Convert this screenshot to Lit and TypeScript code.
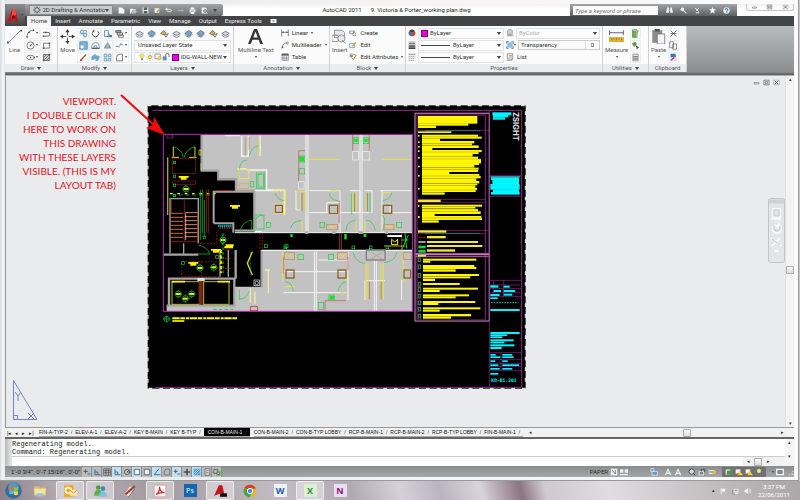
import { LitElement, html, svg, css, SVGTemplateResult, TemplateResult } from "lit";
import { customElement, property } from "lit/decorators.js";
import { classMap } from "lit/directives/class-map.js";

/* ---------- icons, each on a 12 x 12 grid ---------- */

const K = "#555";
const B = "#3f83b5";
const ln = (d: string, c = K, w = 1) => svg`<path d=${d} fill="none" stroke=${c} stroke-width=${w} />`;
const fl = (d: string, c = K) => svg`<path d=${d} fill=${c} />`;

const icons: Record<string, SVGTemplateResult> = {
  line: svg`${ln("M1.500 10.500L10.500 1.500", K, 0.5)}${fl("M0 10h1.500v1.500H0zM10.500 .5H12V2h-1.500z", K)}`,
  arc: svg`${ln("M1.500 10.500C2 4 5 2 10 1.500")}${fl("M.5 9.500h2v2h-2zM9 .5h2v2H9zM3 3.500h2v2H3z", K)}`,
  polyline: svg`${ln("M1 4.500h7a2.500 2.500 0 0 1 0 5H2", K, 1.200)}${fl("M1 8.500h2v2H1zM4 3.500h2v2H4z")}`,
  circle: svg`<circle cx="6" cy="6" r="4.800" fill="none" stroke="#555" />${ln("M6 6L9 3")}${fl("M5 5h2v2H5z")}`,
  rect: svg`${ln("M2 3h8v6.500H2z")}${fl("M1 8.500h2v2H1zM9 2h2v2H9z")}`,
  ellipse: svg`<ellipse cx="6" cy="6" rx="5" ry="3" fill="none" stroke="#555" />${fl("M5 5h2v2H5zM10 5h2v2h-2z")}`,
  hatch: svg`${fl("M2 2h8v8H2z", "#ccc")}${ln("M2 2h8v8H2zM2 6l4-4M2 10l8-8M6 10l4-4")}${fl("M1 9h2v2H1zM9 1h2v2H9z")}`,
  move: svg`${ln("M6 2v8M2 6h8", K, 0.8)}${fl("M6 0l1.600 2.500H4.400zM6 12l1.600-2.500H4.400zM0 6l2.500-1.600v3.200zM12 6L9.500 4.400v3.200z", "#333")}${fl("M5 5h2v2H5z", "#fff")}`,
  copy: svg`<circle cx="4" cy="4" r="2.500" fill="#cde" stroke=${B} /><circle cx="8" cy="8" r="2.500" fill="#cde" stroke=${B} />${ln("M7 2h3v3", K, 0.8)}`,
  rotate: svg`${ln("M3 3a4.300 4.300 0 1 0 6 0", K, 1.300)}${fl("M4.500 .5v4L1.500 3z")}`,
  stretch: svg`${ln("M2 2h5v8H2z", B)}${ln("M7 5l3 5H5", K)}${fl("M9 8h3v3H9z", B)}`,
  scale: svg`${fl("M1 1h10v10H1z", "#7fb2d8")}${fl("M2 6h4v4H2z", "#fff")}${ln("M1 1h10v10H1z", B)}`,
  mirror: svg`${fl("M5 2v8H1zM7 2v8h4z", "#6d8ea8")}${ln("M6 1v10", K, 0.6)}`,
  offset: svg`${ln("M1 10V7a5 5 0 0 1 10 0v3zM4 9.500V8a2 2 0 0 1 4 0v1.500z", B)}${fl("M1 9h10v1.500H1z", K)}`,
  brush: svg`${ln("M3 9l6.500-7", "#8a5a2a", 1.600)}${fl("M1 11l1-3.500L5 10z", "#d33")}`,
  group: svg`${fl("M1 5l4-3 3 2-3 4-4 1zM6 6l3-3 3 2-2 5-4 1z", "#74aad2")}${ln("M1 5l4-3 3 2-3 4-4 1z", B, 0.6)}`,
  array: svg`${ln("M1.500 1.500h3.500v3.500h-3.500zM7 1.500h3.500v3.500H7zM1.500 7h3.500v3.500h-3.500zM7 7h3.500v3.500H7z", B)}`,
  fillet: svg`${ln("M2 10.500V6a4.500 4.500 0 0 1 4.500-4.500H10V10.500z")}`,
  trim: svg`${ln("M1 7h4M7 5h4", K)}${ln("M5 9l3-7", B, 0.7)}`,
  stack: svg`${fl("M1 2h7v3H1z", "#999")}${ln("M1 2h7v3H1zM3 5h7v3H3zM5 8h6v3H5z")}`,
  layers: svg`${fl("M1 6l5-3 5 3-5 3z", "#cfd8df")}${ln("M1 6l5-3 5 3-5 3zM1 8.500l5 3 5-3", "#667")}`,
  layersBlue: svg`${fl("M1 6l5-4 5 3-4 5z", "#73a6cc")}${ln("M1 6l5-4 5 3-4 5zM2 9l5 2 4-4", "#567")}`,
  layersGold: svg`${fl("M1 6l4-4 3 3-3 3z", "#d9b24c")}${ln("M1 6l4-4 3 3-3 3zM6 8l5-2-3 5z")}`,
  bulb: svg`<circle cx="6" cy="4.500" r="3.200" fill="#f4ee62" stroke="#998" stroke-width=".7" />${fl("M4.800 8h2.400v3H4.800z", "#777")}`,
  sun: svg`<circle cx="6" cy="6" r="2.500" fill="#ffe36b" stroke="#a83" stroke-width=".8" />${ln("M6 .5v2M6 9.500v2M.5 6h2M9.500 6h2M2 2l1.500 1.500M10 2L8.500 3.500M2 10l1.500-1.500M10 10L8.500 8.500", "#a83", 0.8)}`,
  freeze: svg`${ln("M1.500 1.500h8v7h-8z", "#666")}<circle cx="8" cy="8" r="2.600" fill="#ffdc59" stroke="#b83" stroke-width=".7" />`,
  lock: svg`${fl("M1 5h6v6H1z", "#5a8fbb")}${ln("M5.500 5V3a2 2 0 0 1 5 0v3", K, 1.200)}`,
  letterA: svg`${fl("M0 12L4.800 0h2.400L12 12H9.800L8.500 8.600h-5L2.200 12zM4.200 6.800h3.600L6 2z", "#333")}`,
  linear: svg`${ln("M1 1v10M11 1v10M1 5h10", K, 1)}${fl("M1 5l3-1.500v3zM11 5L8 3.500v3z")}`,
  leader: svg`${ln("M2 10C3 3 6 3 8 3", K)}${fl("M.5 11.500l1-4 2.500 2z")}<circle cx="9.500" cy="3" r="1.500" fill="none" stroke="#555" />`,
  table: svg`${fl("M1 1h10v3H1z", "#667")}${ln("M1.500 1.500h9.500v9.500h-9.500zM1 7.500h10M4.500 4v7M8 4v7", K, 0.8)}`,
  insert: svg`${fl("M2 1h7v5H2z", "#e4e6e8")}${ln("M2 1h6l2 2v4H2zM0 5h5v5H0z", "#888", 0.7)}<circle cx="7.500" cy="7.500" r="2.800" fill="#e8eaec" stroke="#888" stroke-width=".7" />${ln("M8 9l3 2.500", "#888", 0.7)}`,
  create: svg`${ln("M1 3h6v4H1zM8 2v5", "#777")}<circle cx="8" cy="8" r="2.500" fill="#eee" stroke="#777" />`,
  edit: svg`${ln("M1 4h7v6H1z", B)}${ln("M5 8l5-6", "#c9a227", 1.800)}`,
  attr: svg`${fl("M1 3h5v3H1z", "#999")}${ln("M2 1l8 2-3 7-4-4z", "#777")}${ln("M7 9l4-6", "#c9a227", 1.500)}`,
  wheel: svg`<circle cx="6" cy="6" r="5" fill="#e8c73c" />${fl("M6 6L1.500 3.500A5 5 0 0 1 10.500 3.500z", "#444")}${fl("M6 6l4.500-2.500A5 5 0 0 1 6 11z", "#d43d3d")}${fl("M6 6v5A5 5 0 0 1 1.500 3.500z", "#3f6fc4")}`,
  plotStyle: svg`<circle cx="6" cy="4.500" r="4" fill="#ccc" stroke="#999" />${fl("M1 7h10v4H1z", "#bbb")}${ln("M3 9h6", "#888")}`,
  weight: svg`${fl("M1 1h10v1H1zM1 3.500h10v1.500H1zM1 6.500h10v2H1zM1 9.500h10v2.500H1z", "#444")}`,
  types: svg`${ln("M1 2h10", K)}<path d="M1 5h10M1 8h10M1 11h10" stroke="#666" stroke-dasharray="2 1" />`,
  list: svg`${ln("M2 1h8v8H2zM4 3.500h5M4 6h5M1 11h8V9", "#666", 0.9)}`,
  bluebox: svg`${fl("M2 2h8v8H2z", "#8cc3e6")}${ln("M1 4V1h3M8 1h3v3M11 8v3H8M4 11H1V8", "#357")}`,
  measure: svg`${ln("M.5 1v4M11.500 1v4M.5 3h11", "#556", 0.7)}${fl("M0 6.500h12v4H0z", "#d9b13e")}${ln("M2 7v2M4 7v1.500M6 7v2M8 7v1.500M10 7v2", "#8a6a10", 0.5)}`,
  quick: svg`${fl("M2 2h5v9H2z", "#6cae4c")}${ln("M2 1h6v10H2z", "#486")}${ln("M5 8l5-6", "#b93", 1.500)}`,
  select: svg`${fl("M1 3l5-2 2 3-4 4z", "#5a9e52")}${fl("M6 5l5 4-2 .5-1 2z", "#456")}`,
  calc: svg`${fl("M2 1h8v10H2z", "#888")}${fl("M3 2h6v2H3z", "#dfe7ea")}${ln("M3 6h6M3 8h6M3 10h6", "#ddd", 0.8)}`,
  paste: svg`${fl("M1 1h8v10H1z", "#8d8d8a")}${fl("M3 0h4v2H3z", "#555")}${fl("M5 4h6v8H5z", "#f2f4f6")}${ln("M5 4h6v8H5z", "#667", 0.6)}`,
  cut: svg`${ln("M2 2l8 8M10 2l-8 8M2 6h8", "#555", 1)}`,
  copyDoc: svg`${fl("M1 1h5v8H1zM5 4h6v7H5z", "#fff")}${ln("M1 1h5v8H1zM5 4h5v7H5z", "#666")}`,
  matchProp: svg`${fl("M2 1h7v5H2z", "#3e78b3")}${fl("M4 6h7v5H4z", "#dde")}${ln("M2 10l5-4", "#c33", 1.500)}`,
  gear: svg`<circle cx="6" cy="6" r="3.500" fill="none" stroke="#555" stroke-width="1.500" />${ln("M6 0v2M6 10v2M0 6h2M10 6h2M2 2l1 1M10 2L9 3M2 10l1-1M10 10L9 9")}`,
  newDoc: svg`${fl("M1 1h6l4 4v6H1z", "#fafafa")}`,
  open: svg`${fl("M0 3h5l1 1h4v2H4l-2 5H0z", "#eee")}${fl("M4 7h8l-2 4H3z", "#bbb")}`,
  save: svg`${fl("M1 1h10v10H1z", "#e5e8ea")}${fl("M3 1h6v4H3zM3 7h6v4H3z", "#566")}`,
  saveAs: svg`${fl("M1 2h8v8H1z", "#e5e8ea")}${ln("M5 9l6-6", "#c8a040", 2)}`,
  undo: svg`${ln("M4 8h5a2 2 0 0 0 0-4H3", "#eee", 1.500)}${fl("M0 4l4-3v6z", "#eee")}`,
  redo: svg`${ln("M1 6h8", "#aaa", 1.500)}${fl("M12 6L8 3v6z", "#aaa")}`,
  print: svg`${fl("M1 4h10v5H1z", "#eee")}${fl("M3 1h6v3H3zM3 8h6v4H3z", "#fff")}${ln("M3 7h6", "#444")}`,
  preview: svg`${fl("M1 1h7l2 2v8H1z", "#eee")}<circle cx="7" cy="7" r="2.500" fill="#bcd" stroke="#444" />${ln("M9 9l2 2", "#eee", 1.500)}`,
  binoc: svg`${fl("M2 1h3v5h2V1h3l2 9H7V7H5v3H0z", "#eee")}`,
  key: svg`<circle cx="4" cy="4" r="3" fill="#eee" />${ln("M5 5l6 6", "#eee", 2)}`,
  sat: svg`${ln("M2 2l6 6M8 2L4 7M3 10h6", "#eee", 1.700)}`,
  star: svg`${fl("M6 0l1.800 4H12L8.700 6.800 10 11.500 6 8.800 2 11.500l1.300-4.700L0 4h4.200z", "#f4f4f4")}`,
  help: svg`<circle cx="6" cy="6" r="5.500" fill="#dfe6f2" />${ln("M4 4.500a2 2 0 1 1 2.500 2V8M6.500 9v1.200", "#246", 1.300)}`,
  winMin: svg`${ln("M2 6h8v2.500H2z", "#666")}`,
  winMax: svg`${ln("M1.500 2h9v8h-9zM4 4.500h4v3H4z", "#666", 1.200)}`,
  winClose: svg`${ln("M1 2h10v8H1z", "#999", 0.8)}${ln("M3 3l6 6M9 3L3 9", "#555", 1.600)}`,
  logo: svg`${fl("M0 12L5 0h3l2 12H7.500L7 9 3 12z", "#c5141a")}${fl("M5 0h3l.5 5L4 9z", "#ef4a47")}${fl("M5 6h2v2.500H4.500z", "#5d0508")}`,
  snap: svg`${ln("M1 5h6M4 2v6M7 9h4", "#444", 1.200)}`,
  ortho: svg`${ln("M3 2v8h8M3 6h4v4", "#36698e", 1.300)}`,
  grid: svg`${ln("M1 1h10v10H1zM1 4h10M1 7h10M4.500 1v10M8 1v10", "#444", 0.9)}`,
  polar: svg`<circle cx="6" cy="6" r="4" fill="none" stroke="#444" />${ln("M6 6h6M6 6l4-4", "#444")}`,
  osnap: svg`${fl("M2 2h8v8H2z", "#eef5f8")}${ln("M2 2h8v8H2z", "#456", 1.200)}`,
  angle: svg`${ln("M9 1L2 10h9", "#36698e", 1.400)}`,
  plus: svg`${ln("M1 6h10M6 1v10", "#222", 1.600)}`,
  shade: svg`${fl("M1 1h10v10H1z", "#4f9bd0")}${ln("M1 4l3-3M1 8l7-7M1 11L11 1M5 11l6-6", "#bfe0f2")}`,
  sheetOff: svg`${fl("M3 1h7v10H3z", "#d5d6d7")}${ln("M3 1h7v10H3zM5 4h3M5 7h3", "#555")}`,
  cycle: svg`${ln("M1 2h6v6H1z", "#444")}${fl("M5 5h6v6H5z", "#4e9c44")}${fl("M7 7h2v2H7z", "#fff")}`,
  modelTab: svg`${fl("M1 1h10v10H1z", "#eee")}${ln("M3 3l5 6V3", "#555")}`,
  quickview: svg`${fl("M0 2h5v5H0zM7 2h5v5H7zM0 9h12v2H0z", "#eee")}`,
  world: svg`${fl("M2 3h9v7H2z", "#5fa0cc")}${ln("M1 1h5v4H1zM3 5h8v6H3z", "#e8f0f4")}`,
  person: svg`${ln("M2 11L6 2l4 9M4 8h6", "#e7f1f5", 1.700)}`,
  lens: svg`<circle cx="5.500" cy="5.500" r="4" fill="#ddd" stroke="#333" stroke-width="1.200" />${ln("M8.500 8.500L11 11", "#333", 1.500)}`,
  padlock: svg`${fl("M1 5h8v6H1z", "#e6e6e6")}${ln("M5 5V2h5v4M3 7h4v2H3z", "#333")}`,
  barYellow: svg`${fl("M1 3h9v2H1zM1 7h9v2H1z", "#eee")}${fl("M7 4h5v5H7z", "#e0ba37")}`,
  tgreen: svg`${fl("M1 2h7v8H1z", "#d7e4ee")}${fl("M3 4h8v6H3z", "#4b9a3c")}`,
  tyellow: svg`${fl("M1 2h7v7H1z", "#f4f4e8")}${fl("M7 4l5 7H3z", "#f0cd31")}${fl("M2 8h3v2H2z", "#c43")}`,
  screen: svg`${fl("M0 2h12v8H0z", "#f8f8f8")}${fl("M4 5h4v2H4z", "#555")}`,
  clean: svg`${fl("M1 2h10v8H1z", "#8a8c8d")}${ln("M1 2h10v8H1z", "#f8f8f8", 1.800)}`,
  flag: svg`${ln("M2 1v10", "#f4f4f4", 1.500)}${fl("M3 2h6v5H3z", "#f4f4f4")}`,
  net: svg`${fl("M3 2h8v6H3zM5 9h5v2H5z", "#f4f4f4")}${ln("M1 4v7h4M5 4h4v2H5z", "#777")}`,
  sound: svg`${fl("M1 4h2l4-3v10L3 8H1z", "#f4f4f4")}${ln("M8.500 3.500q2 2.500 0 5M10.500 2q3 4 0 8", "#f4f4f4")}`,
  start: svg`<circle cx="6" cy="6" r="5.800" fill="#2f6e9f" /><circle cx="6" cy="4" r="3.800" fill="#6fb0d2" opacity=".6" />${fl("M3 3.500q1.500-1 2.700-.3v2.500Q4.500 5 3 5.800z", "#ef6a35")}${fl("M6.200 3.400q1.500.8 3 .1v2.400q-1.500.8-3 0z", "#8cc63f")}${fl("M3 6.400q1.500-.9 2.700-.2v2.500Q4.500 8 3 8.900z", "#4db8ea")}${fl("M6.200 6.400q1.500.8 3 .1v2.400q-1.500.8-3 0z", "#fcd53c")}`,
  folder: svg`${fl("M1 2h4l1 1h5v7H1z", "#d9bd63")}${fl("M1 4h10l-.5 5h-9z", "#f4e4a0")}${fl("M3 8h6v3H3z", "#8fc2de")}`,
  outlook: svg`${fl("M1 1h8v10H1z", "#f0a91e")}<circle cx="4.500" cy="5.500" r="2.400" fill="none" stroke="#fff" stroke-width="1.400" />${fl("M6 5h6v5H6z", "#fbe7a9")}${ln("M6 5l3 3 3-3", "#c98512", 0.7)}`,
  people: svg`<circle cx="4.500" cy="3" r="2" fill="#4c9e3c" /><circle cx="8.500" cy="4" r="2" fill="#4a86b8" />${fl("M1 10q0-5 3.500-5T8 10z", "#5cb048")}${fl("M5 11q0-4.500 3.500-4.500T12 11z", "#79bfe0")}`,
  paint: svg`${fl("M1 9l5-7 4 2-4 7z", "#e8e2dc")}${ln("M2 9L10 2", "#a33b22", 1.800)}${ln("M5 11l5-7", "#554", 0.8)}`,
  pdf: svg`${fl("M1 1h10v10H1z", "#fbf6f5")}${ln("M1 1h10v10H1z", "#c99", 0.6)}${ln("M2.500 9C5 8 6 4 5.500 2.500 6 6 8 7.500 10 7.500 7 7 4 8 2.500 9z", "#d42a22", 1)}`,
  cad: svg`${fl("M1 10L5 1h3l2 9-3-2z", "#c3161c")}${fl("M6 8h6v3H6z", "#111")}`,
  chrome: svg`<circle cx="6" cy="6" r="5.500" fill="#e2b92d" />${fl("M6 6L1.200 3.200A5.500 5.500 0 0 1 11 4H6z", "#d9402f")}${fl("M6 6L1.200 3.200A5.500 5.500 0 0 0 5.500 11.500L8 7z", "#4aa350")}<circle cx="6" cy="6" r="2.300" fill="#4d8fd6" stroke="#fff" stroke-width=".8" />`,
  corner: svg`${fl("M8 8h3v3H8zM4 9h2v2H4zM9 4h2v2H9z", "#ccc")}`,
};

@customElement("ui-icon")
export class UiIcon extends LitElement {
  @property() name = "";
  static styles = css`
    :host { display: inline-flex; flex: none; width: 8px; height: 8px; }
    svg { width: 100%; height: 100%; display: block; }
  `;
  render() {
    return html`<svg viewBox="0 0 12 12" aria-hidden="true">${icons[this.name]}</svg>`;
  }
}

/* ---------- the drawing sheet, in thirds of a pixel ---------- */

type Box = [number, number, number, number];
const boxes = (list: Box[], c: string) =>
  list.map(([x, y, w, h]) => svg`<rect x=${x} y=${y} width=${w} height=${h} fill=${c} />`);
const frames = (list: Box[], c: string, w = 2) =>
  list.map(([x, y, bw, h]) => svg`<rect x=${x} y=${y} width=${bw} height=${h} fill="none" stroke=${c} stroke-width=${w} />`);
const path = (d: string, c: string, w = 2, dash = "none") =>
  svg`<path d=${d} fill="none" stroke=${c} stroke-width=${w} stroke-dasharray=${dash} />`;
const tag = (x: number, y: number) => svg`
  <circle cx=${x} cy=${y} r="9" fill="none" stroke="#1fd03a" stroke-width="2" />
  <path d="M${x - 13} ${y}h26M${x} ${y - 13}v26" stroke="#1fd03a" stroke-width="1.500" />
  <rect x=${x - 7} y=${y - 3} width="14" height="6" fill="#e6ea10" />`;
const plate = (x: number, y: number) =>
  svg`<path d="M${x} ${y}h30v5h-6v6h-18v-6h-6z" fill="#fff200" />`;

const Y = "#fff600";
const C = "#00f4ff";
const M = "#a32aa0";
const G = "#19d23c";
const R = "#c42020";
const W = "#f4f4f4";
const WALL = "#a5a5a5";

const noteBars: Box[] = [
  [39, 48, 178, 23], [39, 70, 151, 7], [39, 77, 54, 7],
  [51, 104, 168, 7], [51, 110, 179, 6], [51, 116, 54, 8], [51, 123, 157, 7], [51, 130, 150, 6],
  [51, 136, 170, 8], [51, 142, 31, 9], [51, 150, 179, 6], [51, 156, 170, 6], [51, 162, 152, 8], [51, 170, 168, 7],
  [51, 177, 177, 13], [51, 189, 171, 6], [51, 195, 157, 8], [51, 203, 170, 6], [51, 209, 168, 7], [51, 216, 82, 7],
  [51, 222, 172, 6], [51, 228, 176, 7], [51, 235, 163, 8], [51, 243, 172, 7], [51, 250, 166, 6], [51, 256, 160, 8],
  [51, 264, 165, 6], [51, 270, 161, 6], [51, 277, 68, 7],
  [51, 314, 180, 6], [51, 320, 160, 6], [51, 327, 168, 7], [51, 334, 176, 8], [51, 341, 38, 7],
  [51, 348, 178, 6], [51, 354, 180, 6], [51, 361, 50, 7],
  [54, 476, 160, 6], [54, 482, 22, 6], [54, 495, 154, 6], [54, 501, 160, 6], [54, 508, 98, 7],
  [54, 522, 168, 6], [54, 529, 142, 6], [54, 536, 36, 7], [54, 549, 110, 6],
  [54, 563, 165, 6], [54, 570, 50, 6], [54, 583, 138, 6], [54, 589, 98, 6],
  [54, 603, 157, 6], [54, 609, 46, 6], [54, 622, 172, 6], [54, 629, 50, 6],
  [54, 642, 144, 7], [54, 649, 84, 7],
];
const paleBars: Box[] = [
  [39, 94, 100, 5], [39, 299, 68, 7], [39, 391, 85, 7], [66, 408, 56, 7], [66, 423, 153, 6],
  [66, 435, 166, 6], [66, 448, 84, 7], [39, 465, 24, 5],
  [39, 105, 5, 5], [39, 124, 5, 5], [39, 138, 5, 5], [39, 151, 5, 5], [39, 171, 5, 5], [39, 197, 5, 5],
  [39, 225, 5, 5], [39, 264, 5, 5], [39, 315, 4, 6], [39, 348, 5, 6],
];
const cyanBars: Box[] = [
  [262, 37, 57, 9], [264, 45, 46, 7], [264, 52, 36, 7],
  [258, 232, 84, 8], [262, 240, 80, 12], [256, 252, 88, 17], [264, 268, 78, 9], [258, 276, 86, 8],
  [256, 556, 24, 7], [296, 557, 18, 6], [266, 570, 22, 6], [296, 570, 34, 6], [256, 582, 28, 6], [296, 581, 26, 6],
  [256, 592, 22, 5], [256, 627, 88, 6],
  [256, 696, 88, 6], [256, 703, 50, 5], [256, 709, 36, 5], [256, 718, 70, 6], [256, 725, 42, 5], [256, 733, 72, 6], [256, 741, 34, 6],
  [256, 762, 16, 5], [292, 762, 30, 5], [256, 769, 30, 5], [292, 769, 34, 5], [256, 781, 14, 5], [292, 781, 16, 5],
  [256, 793, 24, 5], [292, 793, 50, 5], [256, 804, 28, 5], [292, 804, 30, 5], [256, 819, 24, 5],
];

@customElement("sheet-drawing")
export class SheetDrawing extends LitElement {
  static styles = css`
    :host { display: block; }
    svg { display: block; width: 100%; }
    .brand { font: 700 23px Inter, sans-serif; fill: #e8e8e8; }
    .number { font: 700 14px "DejaVu Sans Mono", monospace; fill: #00f4ff; }
  `;

  private suite() {
    return svg`
      <path d="M170 105H802V398H328V272H275V236H220V212H170z" fill="#c2c2c2" />
      <path d="M350 450H802V634H65V617H270V560H350z" fill="#c2c2c2" />
      ${path("M170 105V212H220V238H273V272H328V392H270", WALL, 7)}
      ${path("M206 370V275H330M206 370H265V398", WALL, 6)}
      ${path("M350 562V450M65 617H268V536H72V617M272 450V536M55 464H160", WALL, 7)}
      ${path("M75 460V296H160V430M116 430V464M225 450V530M250 450V530", WALL, 4)}
      ${path("M270 398H802", W, 3)}${path("M350 451H802", W, 4)}`;
  }

  private core() {
    return svg`
      ${path("M85 170V140M150 170V140M80 172H102M132 172H155", "#cbd83a", 3)}
      ${path("M85 140Q112 150 115 172M150 140Q120 150 118 172", G)}
      ${frames([[83, 176, 68, 45], [83, 243, 68, 10]], "#8e1c1c")}
      ${path("M68 172V345", "#a8ac28", 4)}${path("M162 150h6v15h-6zM168 190V210", Y)}
      ${frames([[85, 184, 7, 7], [85, 225, 7, 7], [85, 252, 7, 7], [85, 283, 7, 7]], G)}
      ${plate(101, 228)}${tag(123, 267)}
      ${path("M75 281H212", Y, 4, "8 14")}${path("M82 285H206", G, 2, "12 8")}
      ${path("M172 268V400M178 300V410M166 270V420", G, 2)}
      ${path("M184 268V400M190 268V400M215 272H265", R)}
      ${path("M75 340h40M75 352h40M75 364h40M75 376h40M75 388h40M75 400h40M75 412h40", "#c86a38", 3)}
      ${path("M120 338h38M120 350h38M120 362h38M120 374h38M120 386h38M120 398h38M120 410h38", "#d88b5a", 3)}
      ${path("M118 300V425M158 335V425M75 425H158M80 300V340", R)}
      ${path("M122 340V420", W)}
      ${plate(255, 315)}
      ${path("M160 435Q185 440 195 462H160M285 395Q290 365 320 360V395", G)}
      ${path("M220 378H262", C, 8, "3 3")}${path("M224 384H262", R, 6, "3 4")}
      ${tag(234, 420)}${plate(198, 447)}${plate(130, 486)}
      ${path("M242 436h24M238 442h26", Y, 6)}
      ${path("M165 430H215V395M110 485H225V530H110zM170 485V530M345 400V450M353 400V450M240 450h22M240 475h22M240 505h22", R, 2, "6 4")}
      ${path("M228 450V520", Y, 5, "10 6")}${path("M234 400V525", G, 3, "8 6")}
      ${frames([[110, 485, 8, 8], [212, 467, 8, 8], [174, 408, 7, 7], [358, 434, 9, 9], [420, 434, 9, 9]], G)}
      ${tag(165, 504)}${tag(206, 502)}
      ${path("M322 455L307 490L322 525", "#d5d940", 4)}${path("M303 483l14 9M317 455V525", G, 1)}
      ${frames([[81, 545, 82, 68], [176, 545, 76, 68]], "#b9b92c", 3)}
      ${path("M80 545H120M218 545H255", Y, 5)}${boxes([[162, 537, 11, 76]], "#7e2420")}
      ${boxes([[157, 534, 22, 9]], "#ddd")}
      ${tag(100, 582)}${tag(140, 582)}${tag(121, 596)}
      ${frames([[327, 540, 16, 17]], W)}<circle cx="335" cy="549" r="5" fill="none" stroke=${W} stroke-width="2" />
      ${path("M283 596Q300 602 315 570M283 570V600", G)}
      ${path("M330 575V612M316 565V608M370 510V580M360 510H375", "#efe9a0", 4)}
      ${frames([[316, 620, 22, 12]], R)}${path("M205 628h60", G, 3, "10 7")}`;
  }

  private units() {
    return svg`
      ${path("M290 107V168H310V107M240 107H285M345 107V168M278 207H305M305 210H365V270H420M330 272H400M330 395H350M418 270V345", W, 4)}
      ${path("M302 110V168M312 110V150", "#b08e5a", 2)}
      ${path("M313 168Q318 140 342 137M283 232V207Q285 182 306 180M330 360Q345 340 355 348M390 280Q400 302 418 302", G)}
      ${path("M343 115V170M282 208H312V236H283zM385 270H420V300", "#eee84a", 3)}
      ${frames([[335, 219, 24, 46], [339, 223, 16, 38], [316, 245, 10, 16], [333, 345, 24, 42], [364, 368, 12, 14]], G)}
      ${frames([[282, 250, 28, 16]], "#e6a93a")}
      ${frames([[388, 312, 28, 28]], "#eee84a")}${frames([[391, 316, 21, 21]], "#8d3a2c", 3)}
      <g transform="translate(405 0)">
        ${path("M78 105V398M84 105V398M240 105V398M246 105V398M0 272H16M88 272H180V398M210 272H240V338H88M300 272H395M306 272V398M330 310V338H395M254 272H276V338H246M140 338V308H178M103 455V634M109 455V634M10 515H200M10 578H200M115 480H205M204 455V600M283 482V634M289 482V634M258 542H315M365 540V600M396 510H375M255 542V600M48 272V330H60", W, 3)}
        ${path("M88 178H178M306 178H395M50 275H76V334M60 275V334M218 278V334M228 278V334M258 278V334M8 272H16V345M15 560H45M8 455V545M258 490V598M264 490V598M302 490V598M310 490V598M148 272H178M305 278H332M66 362V395M228 362V395M255 362V395M200 520V545M180 578H200M370 455V545", "#e9e34c", 3)}
        ${path("M66 278V334M224 278V334M262 278V334M268 545V598M303 545V598", "#8a6048", 2)}
        ${path("M215 278V345M270 278V340M148 280Q150 300 175 302M335 278Q330 300 308 302M32 385Q38 362 64 362M198 392Q200 362 226 362M258 360Q280 362 286 392M308 345Q320 360 308 392M16 545Q38 548 40 574M175 574Q178 548 200 545M220 460Q228 488 254 490M312 488Q345 485 350 458", G)}
        ${path("M75 152H56V245M218 105V152M268 105V152M135 602H198M135 602V632M10 470V520M178 302V370M178 400V450M184 400V450M204 510V470M365 400V450", "#c5524b", 2)}
        ${frames([[58, 168, 16, 18], [58, 206, 16, 16], [220, 113, 16, 18], [250, 113, 16, 18], [120, 367, 14, 16], [350, 367, 14, 16], [54, 463, 16, 16], [145, 463, 16, 16], [147, 585, 16, 14], [115, 608, 16, 20]], G)}
        ${boxes([[60, 170, 12, 14], [223, 116, 10, 10], [253, 116, 10, 10], [149, 587, 13, 10], [31, 402, 7, 9], [193, 402, 7, 16], [251, 402, 8, 9]], "#1ee02c")}
        ${frames([[148, 316, 25, 24], [310, 316, 25, 24], [18, 510, 24, 24], [174, 510, 24, 24], [372, 510, 20, 24]], "#8a6420", 4)}
        ${frames([[140, 373, 32, 16], [312, 373, 30, 16], [14, 458, 30, 20], [172, 458, 30, 20], [370, 458, 26, 20]], "#d8823e", 2)}
        ${path("M150 378l8 6 8-8M320 378l8 6 8-8M20 462l8 8 8-8M180 462l8 8 8-8", Y)}
        ${frames([[218, 155, 18, 25], [248, 155, 20, 25], [56, 245, 16, 22]], W)}
        ${boxes([[75, 394, 10, 8], [157, 394, 10, 8], [236, 394, 14, 8], [316, 394, 8, 8]], "#aaa")}
        ${boxes([[259, 450, 56, 10]], "#a8c8c8")}${frames([[259, 450, 56, 30]], "#8a7c7c", 4)}
        ${path("M275 458l30 18M305 458l-30 18", "#d48a8a")}
        ${path("M322 408h44", W, 6)}${path("M335 418v16h18v-16l-9 8z", Y, 3)}${path("M312 438H375", Y, 2)}
        ${path("M375 400L380 445M365 420h20M385 405L365 450", G, 3)}
        ${frames([[12, 438, 8, 8], [216, 438, 8, 8], [268, 438, 8, 8], [318, 438, 8, 8]], G)}
      </g>`;
  }

  private notes() {
    return svg`<g transform="translate(780 0)">
      ${frames([[30, 40, 223, 623]], "#a76a9c", 4)}${frames([[36, 45, 205, 615]], "#7f2b7e", 3)}
      ${path("M36 91H253M36 298H241M36 307H241M36 391H253M36 401H241", "#93347f", 2)}
      ${path("M32 463H253", "#d56fc8", 6)}${path("M32 470H253", "#a76a9c", 3)}
      ${path("M60 92H225M60 400H225", "#3d8f7c", 2)}
      ${boxes(noteBars, Y)}${boxes(paleBars, "#f2e83a")}
      ${path("M51 110H230M51 136H221M51 156H230M51 177H228M51 203H221M51 228H223M51 250H223M51 270H216M51 327H219M51 354H229", "#8f6f2a", 1)}
      ${path("M40 412H62", R)}${boxes([[40, 423, 22, 6]], "#999")}
      ${boxes([[40, 437, 22, 8], [40, 450, 22, 8]], G)}
      ${frames([474, 495, 521, 547, 563, 583, 603, 622, 643].map((y): Box => [40, y, 7, 11]), "#4c8a4c", 3)}
      ${path("M253 31V863M253 226H350M253 289H350M253 541H350M253 555H345M253 566H350M253 578H345M253 590H350M265 541V590M295 541V590M253 758H350M253 778H350M253 790H350M253 800H350M253 812H350M288 758V812", "#8f2b8c", 2)}
      ${boxes([[256, 228, 90, 5]], "#3c8a8a")}
      ${boxes(cyanBars, C)}
      ${path("M258 608H340", "#2f9a94", 4, "5 3")}
      <text class="brand" transform="translate(325 36) rotate(90)">ZSIGHT</text>
      <text class="number" x="259" y="845">KD-B1.201</text>
    </g>`;
  }

  render() {
    return html`<svg viewBox="0 0 1155 870" role="img" aria-label="Floor plan layout sheet">
      <rect x="8" y="16" width="1134" height="850" fill="#000" />
      <rect x="8" y="16" width="1134" height="850" fill="none" stroke="#dfe3e6" stroke-width="5" stroke-dasharray="11 21" />
      ${path("M22 31H1130V862H30", "#8f2b8c", 3)}
      ${this.suite()}${this.core()}${this.units()}
      ${frames([[55, 103, 747, 531]], "#b030b0", 3)}${frames([[66, 104, 16, 10]], M)}
      <circle cx="65" cy="657" r="8" fill="none" stroke=${G} stroke-width="2" />
      ${path("M53 657h24M65 646v22", G)}
      ${path("M82 655H278", Y, 6, "22 2 14 3 9 2")}${path("M82 663H118", Y, 5)}
      ${this.notes()}
    </svg>`;
  }
}

/* ---------- application window ---------- */

const menu = ["Home", "Insert", "Annotate", "Parametric", "View", "Manage", "Output", "Express Tools"];
const sheets = ["FIN-A-TYP-2", "ELEV-A-1", "ELEV-A-2", "KEY B-MAIN", "KEY B-TYP", "CON-B-MAIN-1", "CON-B-MAIN-2",
  "CON-B-TYP LOBBY", "RCP-B-MAIN-1", "RCP-B-MAIN-2", "RCP-B-TYP LOBBY", "FIN-B-MAIN-1"];
const toggles: [string, boolean][] = [["snap", false], ["ortho", false], ["grid", false], ["ortho", true], ["polar", false],
  ["osnap", true], ["osnap", false], ["angle", true], ["fillet", false], ["snap", true], ["plus", false], ["shade", true], ["sheetOff", false], ["cycle", false]];
const taskbar: [string, string, boolean][] = [["folder", "Explorer", false], ["outlook", "Outlook", true], ["people", "Messenger", true],
  ["paint", "SketchUp", false], ["pdf", "Acrobat", true], ["ps", "Photoshop", false], ["cad", "AutoCAD", true], ["chrome", "Chrome", false],
  ["word", "Word", false], ["excel", "Excel", true], ["onenote", "OneNote", false]];
const letters: Record<string, string> = { ps: "Ps", word: "W", excel: "X", onenote: "N" };

@customElement("app-root")
export class AppRoot extends LitElement {
  static styles = css`
    :host { display: flex; flex-direction: column; height: 100vh; min-height: 400px; overflow: hidden;
      font: 6px/8px Roboto, "Open Sans", sans-serif; color: #333; background: #c9c6c8; }
    * { box-sizing: border-box; }
    button, select, input { font: inherit; color: inherit; margin: 0; padding: 0; border: 0; background: none; border-radius: 0; }
    button { display: inline-flex; align-items: center; justify-content: center; white-space: nowrap; }
    select { appearance: none; width: 100%; height: 100%; }
    .tri { flex: none; width: 0; height: 0; border: 2px solid transparent; border-top: 3px solid #444; border-bottom: 0; }
    .small { border-width: 1px; border-top-width: 2px; }

    .window { flex: 1; min-height: 0; display: flex; flex-direction: column; margin: 0 1px 0 0; padding: 4px 4px 3px 5px;
      background: linear-gradient(90deg, #d6d9db, #f7f7f8 3px, #e3e5e7 5px, #f4f4f5 50%, #fbfbfb);
      border: solid #999; border-width: 0 1px 1px 0; }
    .top { display: grid; grid-template: 12px 10px / 20px 1fr; flex: none; }
    .app { grid-row: 1 / 3; background: linear-gradient(#8b8d8f, #444); gap: 1px; }
    .app ui-icon { width: 13px; height: 17px; }
    .title { display: flex; align-items: center; background: linear-gradient(#f4f0f2, #fff 40%); }
    .quick { display: flex; align-items: center; height: 12px; width: 198px; background: linear-gradient(#a2a4a6, #6d6f71); border-radius: 0 2px 2px 0; padding: 1px 4px; }
    .combo { display: flex; align-items: center; position: relative; background: #fcfcfc; border: 1px solid #e0e2e4; height: 11px; padding: 0 3px; }
    .quick .combo { width: 84px; height: 10px; background: #c9cbcc; border-color: #888; }
    .quick .bar { flex: 1; display: flex; justify-content: space-around; align-items: center; padding-left: 3px; }
    .quick .bar ui-icon, .help ui-icon { width: 7px; height: 7px; }
    .caption { flex: 1; display: flex; justify-content: center; gap: 9px; white-space: nowrap; color: #222; }
    .help { display: flex; align-items: center; width: 167px; height: 12px; background: linear-gradient(#a2a4a6, #5d5f61); padding: 1px 3px; gap: 4px; }
    .help input { width: 85px; height: 9px; background: #fafafa; padding: 0 2px; font-style: italic; }
    .help .tools { flex: 1; display: flex; justify-content: space-around; }
    .winbtns { display: flex; align-self: flex-start; justify-content: space-around; width: 48px; height: 7px; margin: 0 0 0 9px; border: 1px solid #c5c7c9; border-top: 0; border-radius: 0 0 3px 3px; }
    .winbtns ui-icon { width: 7px; height: 6px; }
    .menu { display: flex; align-items: stretch; background: #434445; color: #eee; padding-left: 2px; }
    .menu button { padding: 0 4px; }
    .menu .on { background: linear-gradient(#e8e9ea, #f9f9f9); color: #444; padding: 0 4px; }
    .menu ui-icon { width: 7px; height: 6px; }

    .ribbon { display: flex; flex: none; height: 46px; background: linear-gradient(#b9bbbc, #8b8d8f); }
    .panel { display: flex; flex-direction: column; flex: none; background: #fbfbfb; border-right: 1px solid #cfd1d3; }
    .body { flex: 1; display: flex; align-items: center; gap: 2px; padding: 1px 2px; }
    .foot { display: flex; align-items: center; justify-content: center; gap: 3px; height: 8px; background: #ebecee; color: #555; }
    .big { flex-direction: column; gap: 2px; align-self: stretch; justify-content: flex-start; padding-top: 2px; color: #555; }
    .big ui-icon { width: 15px; height: 15px; }
    .draw { width: 53px; } .modify { width: 74px; } .layers { width: 102px; } .annotation { width: 96px; }
    .block { width: 76px; } .properties { width: 197px; } .utilities { width: 46px; } .clipboard { width: 38px; }
    .annotation .body { gap: 7px; padding-left: 4px; }
    .tools3 { display: grid; grid-auto-rows: 12px; grid-auto-flow: row; align-items: center; justify-content: start; }
    .tools3 button { height: 11px; border: 1px solid #eceef0; gap: 1px; }
    .tools3 ui-icon, .icons ui-icon { width: 9px; height: 9px; }
    .c1 { grid-template-columns: 11px; } .c2 { grid-template-columns: 16px 12px; } .c4 { grid-template-columns: 12px 12px 12px 16px; }
    .stack { display: grid; grid-auto-rows: 12px; align-items: center; flex: 1; min-width: 0; }
    .stack > button { justify-content: flex-start; gap: 3px; }
    .icons { display: flex; justify-content: space-between; padding: 0 1px; }
    .swatch { flex: none; width: 7px; height: 7px; background: #ee00e6; border: 1px solid #707; margin-right: 2px; }
    .rule { flex: none; width: 29px; height: 1px; background: #444; margin-right: 3px; }
    .prop { display: flex; align-items: center; gap: 2px; }
    .prop .combo { flex: 1; padding: 0 2px; }
    .col1 { flex: none; width: 96px; } .dim { color: #aaa; }
    .trans { display: flex; flex: 1; align-items: center; height: 10px; border: 1px solid #ccc; padding-left: 2px; justify-content: space-between; }
    .trans input { width: 14px; height: 8px; border-left: 1px solid #ddd; text-align: center; }
    .seam { flex: none; height: 4px; background: linear-gradient(#8f9192, #5a5b5c 60%, #d5d6d7); }

    .work { flex: 1; min-height: 0; display: flex; border-left: 1px solid #999; }
    .canvas { flex: 1; position: relative; overflow: hidden; background: #e9ebed; }
    .canvas sheet-drawing { position: absolute; left: 139px; top: 24px; width: 385px; }
    .remark { position: absolute; left: 0; top: 18px; width: 110px; margin: 0; text-align: right; color: #e0141e; font: 10px/14px Lato, sans-serif; }
    .arrow { position: absolute; left: 112px; top: 16px; width: 50px; height: 46px; }
    .ucs { position: absolute; left: 5px; bottom: 5px; width: 28px; height: 44px; }
    .mdi { position: absolute; right: 5px; top: 3px; display: flex; gap: 3px; }
    .mdi ui-icon { width: 7px; height: 7px; }
    .nav { position: absolute; right: 0; top: 122px; width: 17px; height: 65px; }
    .vscroll { flex: none; width: 9px; display: flex; flex-direction: column; align-items: center; background: #f3f3f4; border-left: 1px solid #e0e0e0; }
    .thumb { width: 8px; height: 8px; background: linear-gradient(#fafafa, #ddd); border: 1px solid #aaa; border-radius: 1px; }
    .arr { font-size: 5px; line-height: 7px; color: #333; }
    .before { flex: 5; } .after { flex: 4; }

    .tabs { flex: none; display: flex; align-items: stretch; height: 10px; background: #f1f1f2; border-top: 1px solid #999; font: 5px/8px "Liberation Sans", sans-serif; color: #111; }
    .steps { display: flex; gap: 4px; padding: 0 3px 0 2px; width: 34px; }
    .tabs .sheet { border-bottom: 1px solid #aaa; }
    .tabs .sheet::after { content: "/"; padding: 0 3px; color: #333; }
    .tabs .on { background: #000; color: #eee; margin-right: 4px; padding-left: 4px; }
    .hscroll { flex: 1; display: flex; align-items: center; padding: 0 10px 0 6px; }
    .hscroll .before { flex: 5; } .hscroll .after { flex: 3; }
    .command { flex: none; display: grid; grid-template-columns: 7px 1fr 9px; height: 29px; border-top: 2px solid #666; background: #fff; }
    .grip { background: linear-gradient(90deg, #bbb, #e8e8e8); }
    .log { margin: 0; font: 7px/8px "Liberation Mono", monospace; color: #222; border-bottom: 1px solid #ccc; height: 18px; padding-top: 1px; }
    .prompt { display: flex; height: 9px; }
    .prompt input { flex: 1; }
    .hs { display: flex; align-items: center; gap: 4px; width: 42px; background: #f1f1f2; padding-left: 4px; }
    .vs { display: flex; flex-direction: column; justify-content: space-between; background: #f4f4f5; align-items: center; }
    .status { flex: none; display: flex; align-items: center; height: 11px; background: linear-gradient(#8a8c8d, #a5a7a8); padding-left: 6px; }
    .coords { width: 71px; color: #222; white-space: nowrap; font-family: "Liberation Sans", sans-serif; }
    .toggle { width: 10px; height: 10px; background: #b9bbbc; border: solid #8a8a8a; border-width: 0 1px 0 0; }
    .toggle.on { background: #bfe0ee; }
    .fill { flex: 1; }
    .cluster { display: flex; align-items: center; gap: 2px; margin-left: 6px; }
    .wide { padding-left: 16px; }
    .tray { background: #6f7172; padding: 1px 3px; }

    .taskbar { flex: none; display: flex; align-items: center; height: 19px; padding: 0 5px 0 4px; color: #fff;
      background: linear-gradient(75deg, #8d7f87, #b6adb3 8%, #a29ba0 20%, #c4bcc4 35%, #b1aab2 44%, #d5d0da 50%, #bab4c0 55%, #d8d4dc 60%, #8b7483 65%, #cfc9cf 68%, #e0dce1 76%, #c4bfc1 88%, #aaa7a8); }
    .taskbar ui-icon { width: 14px; height: 14px; }
    .taskbar .start ui-icon { width: 17px; height: 17px; }
    .start { width: 19px; margin-right: 3px; }
    .task { width: 28px; height: 19px; margin-right: 2px; border: 1px solid transparent; border-radius: 2px; }
    .task.on { background: rgba(255, 255, 255, 0.4); border-color: rgba(255, 255, 255, 0.6); }
    .glyph { width: 13px; height: 13px; font: 700 9px/13px "Open Sans", sans-serif; text-align: center; background: #eef3fa; color: #2459a8; border: 0; }
    .glyph.ps { background: #1766ad; color: #9fe0ff; font-size: 7px; }
    .glyph.excel { background: #d9eed3; color: #2f8a35; } .glyph.onenote { background: #f0dcf0; color: #80247c; }
    .tb-tray { display: flex; align-items: center; gap: 5px; }
    .taskbar .tb-tray ui-icon { width: 7px; height: 8px; }
    .clock { width: 36px; text-align: center; margin-right: 3px; }
  `;

  private tri(small = false) {
    return html`<span class=${classMap({ tri: true, small })}></span>`;
  }

  private tool(name: string, drop = false) {
    return html`<button aria-label=${name}><ui-icon name=${name}></ui-icon>${drop ? this.tri(true) : ""}</button>`;
  }

  private combo(label: string, value: string, before: unknown = "") {
    return html`<label class="combo">${before}<select aria-label=${label}><option>${value}</option></select>${this.tri()}</label>`;
  }

  private panel(kind: string, title: string, body: TemplateResult, drop = true) {
    return html`<section class="panel ${kind}"><div class="body">${body}</div>
      <div class="foot">${title}${drop ? this.tri() : ""}</div></section>`;
  }

  private big(icon: string, label: string, drop = false) {
    return html`<button class="big"><ui-icon name=${icon}></ui-icon>${label}${drop ? this.tri(true) : ""}</button>`;
  }

  private row(icon: string, label: string, drop = false) {
    return html`<button><ui-icon name=${icon}></ui-icon>${label}${drop ? this.tri(true) : ""}</button>`;
  }

  private renderTop() {
    return html`<header class="top">
      <button class="app" aria-label="Application menu"><ui-icon name="logo"></ui-icon>${this.tri(true)}</button>
      <div class="title">
        <div class="quick">
          ${this.combo("Workspace", "2D Drafting & Annotation", html`<ui-icon name="gear"></ui-icon>&nbsp;`)}
          <div class="bar">${["newDoc", "open", "save", "saveAs", "undo", "redo", "print", "preview"].map((n) => this.tool(n))}${this.tri()}</div>
        </div>
        <div class="caption"><span>AutoCAD 2011</span><span>9. Victoria &amp; Porter_working plan.dwg</span></div>
        <div class="help"><input aria-label="Search" placeholder="Type a keyword or phrase" />
          <div class="tools">${["binoc", "key", "sat", "star", "help"].map((n) => this.tool(n))}</div></div>
        <div class="winbtns">${["winMin", "winMax", "winClose"].map((n) => this.tool(n))}</div>
      </div>
      <nav class="menu">${menu.map((m, i) => html`<button class=${classMap({ on: i === 0 })}>${m}</button>`)}
        <button aria-label="Ribbon display"><ui-icon name="screen"></ui-icon></button></nav>
    </header>`;
  }

  private renderRibbon() {
    return html`<div class="ribbon">
      ${this.panel("draw", "Draw", html`${this.big("line", "Line")}
        <div class="tools3 c2">${this.tool("arc", true)}${this.tool("polyline")}${this.tool("circle", true)}${this.tool("rect")}${this.tool("ellipse", true)}${this.tool("hatch")}</div>`)}
      ${this.panel("modify", "Modify", html`${this.big("move", "Move")}
        <div class="tools3 c4">${["copy", "rotate", "stretch"].map((n) => this.tool(n))}${this.tool("stack", true)}
          ${["scale", "offset", "mirror"].map((n) => this.tool(n))}${this.tool("trim", true)}
          ${["brush", "group", "array"].map((n) => this.tool(n))}${this.tool("fillet", true)}</div>`)}
      ${this.panel("layers", "Layers", html`<div class="stack">
        <div class="icons">${["layers", "layersBlue", "layersGold", "layers", "layersBlue", "layersBlue", "layersGold", "layers"].map((n) => this.tool(n))}</div>
        ${this.combo("Layer state", "Unsaved Layer State")}
        ${this.combo("Layer", "IDG-WALL-NEW", html`${["bulb", "sun", "freeze", "lock"].map((n) => html`<ui-icon name=${n}></ui-icon>`)}&nbsp;<span class="swatch"></span>`)}
      </div>`)}
      ${this.panel("annotation", "Annotation", html`${this.big("letterA", "Multiline Text", true)}
        <div class="stack">${this.row("linear", "Linear", true)}${this.row("leader", "Multileader", true)}${this.row("table", "Table")}</div>`)}
      ${this.panel("block", "Block", html`${this.big("insert", "Insert")}
        <div class="stack">${this.row("create", "Create")}${this.row("edit", "Edit")}${this.row("attr", "Edit Attributes", true)}</div>`)}
      ${this.panel("properties", "Properties", html`
        <div class="stack col1">
          <div class="prop"><ui-icon name="wheel"></ui-icon>${this.combo("Color", "ByLayer", html`<span class="swatch"></span>`)}</div>
          <div class="prop"><ui-icon name="weight"></ui-icon>${this.combo("Lineweight", "ByLayer", html`<span class="rule"></span>`)}</div>
          <div class="prop"><ui-icon name="types"></ui-icon>${this.combo("Linetype", "ByLayer", html`<span class="rule"></span>`)}</div>
        </div>
        <div class="stack">
          <div class="prop dim"><ui-icon name="plotStyle"></ui-icon>${this.combo("Plot style", "ByColor")}</div>
          <div class="prop">${this.tool("bluebox", true)}<label class="trans">Transparency<input value="0" /></label></div>
          ${this.row("list", "List")}
        </div>`, false)}
      ${this.panel("utilities", "Utilities", html`${this.big("measure", "Measure", true)}
        <div class="tools3 c1">${["quick", "select", "calc"].map((n) => this.tool(n))}</div>`)}
      ${this.panel("clipboard", "Clipboard", html`${this.big("paste", "Paste", true)}
        <div class="tools3 c1">${["cut", "copyDoc", "matchProp"].map((n) => this.tool(n))}</div>`, false)}
    </div>`;
  }

  private renderCanvas() {
    return html`<main class="work">
      <div class="canvas">
        <sheet-drawing></sheet-drawing>
        <p class="remark">VIEWPORT.<br />I DOUBLE CLICK IN<br />HERE TO WORK ON<br />THIS DRAWING<br />WITH THESE LAYERS<br />VISIBLE. (THIS IS MY<br />LAYOUT TAB)</p>
        <svg class="arrow" viewBox="0 0 50 46"><path d="M3 3L36 33" stroke="#f00a0a" stroke-width="2" /><path d="M47 43L28 36l7-3 1-8z" fill="#f00a0a" /></svg>
        <svg class="ucs" viewBox="0 0 28 44" fill="none" stroke="#7185c8"><path d="M2.500 2.500V41.500H26zM2.500 37.500h4v4M4 14l3 4 3-4M7 18v5M17 35l6 6M23 35l-6 6" /></svg>
        <div class="mdi">${["winMin", "winMax", "winClose"].map((n) => html`<ui-icon name=${n}></ui-icon>`)}</div>
        <svg class="nav" viewBox="0 0 17 65" fill="none" stroke="#c3c5c7"><rect x=".5" y=".5" width="16" height="64" rx="2" fill="#e3e5e7" /><path d="M1 3.500h15" stroke="#cfd1d3" stroke-width="4" /><path d="M5 11h7v8H5zM3 21h10M12 10v10M5 28v4q2 4 5 3t3-6l-2-3-2 3-2-3M3 40l10 8M12 40l-8 8M7 53h4" stroke="#f7f7f7" stroke-width="2" /><path d="M6 12h5v6H6zM6 28v3q1 3 4 2t2-5M4 41l8 6" /></svg>
      </div>
      <div class="vscroll"><span class="arr">▴</span><span class="before"></span><span class="thumb"></span><span class="after"></span><span class="arr">▾</span></div>
    </main>`;
  }

  private renderBottom() {
    return html`
      <nav class="tabs">
        <div class="steps">${["|◂", "◂", "▸", "▸|"].map((s) => html`<button>${s}</button>`)}</div>
        ${sheets.map((s) => html`<button class=${classMap({ sheet: true, on: s === "CON-B-MAIN-1" })}>${s}</button>`)}
        <div class="hscroll"><span class="arr">◂</span><span class="before"></span><span class="thumb"></span><span class="after"></span><span class="arr">▸</span></div>
      </nav>
      <section class="command">
        <div class="grip"></div>
        <div><pre class="log">Regenerating model.
Command: Regenerating model.</pre>
          <div class="prompt"><input aria-label="Command" /><span class="hs arr">◂<span class="thumb"></span>&nbsp;▸</span></div></div>
        <div class="vs arr"><span>▴</span><span>▾</span><span></span></div>
      </section>
      <footer class="status">
        <span class="coords">1'-0 3/4", 0'-7 15/16", 0'-0"</span>
        ${toggles.map(([n, on]) => html`<button class=${classMap({ toggle: true, on })} aria-label=${n} aria-pressed=${on}><ui-icon name=${n}></ui-icon></button>`)}
        <span class="fill"></span>
        <div class="cluster"><button>PAPER</button>${this.tool("modelTab")}${this.tool("quickview")}</div>
        <div class="cluster wide">${this.tool("world")}</div>
        <div class="cluster">${this.tool("person")}${this.tool("person")}</div>
        <div class="cluster">${this.tool("lens")}${this.tool("padlock")}${this.tool("barYellow")}</div>
        <div class="cluster tray">${["tgreen", "tyellow", "tyellow", "bulb"].map((n) => this.tool(n))}</div>
        <div class="cluster">${this.tri(true)}${this.tool("clean")}${this.tool("corner")}</div>
      </footer>`;
  }

  render() {
    return html`
      <div class="window">
        ${this.renderTop()}${this.renderRibbon()}
        <div class="seam"></div>
        ${this.renderCanvas()}${this.renderBottom()}
      </div>
      <footer class="taskbar">
        <button class="start" aria-label="Start"><ui-icon name="start"></ui-icon></button>
        ${taskbar.map(([n, label, on]) => html`<button class=${classMap({ task: true, on })} aria-label=${label}>
          ${letters[n] ? html`<span class="glyph ${n}">${letters[n]}</span>` : html`<ui-icon name=${n}></ui-icon>`}</button>`)}
        <span class="fill"></span>
        <div class="tb-tray"><span class="arr">▴</span><ui-icon name="flag"></ui-icon><ui-icon name="net"></ui-icon><ui-icon name="sound"></ui-icon>
          <div class="clock">3:37 PM<br />22/06/2011</div></div>
      </footer>`;
  }
}
